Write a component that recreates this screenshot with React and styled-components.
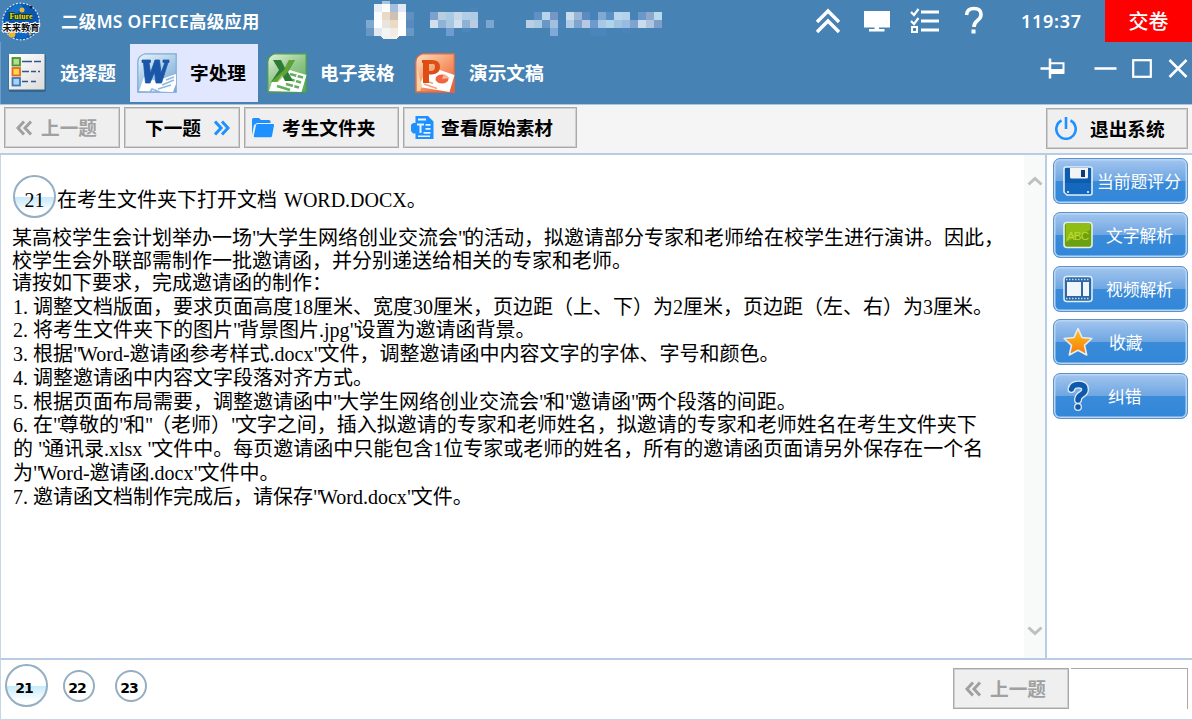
import React from 'react';
import styled, { createGlobalStyle } from 'styled-components';

const GlobalStyle = createGlobalStyle`
  * {
    box-sizing: border-box;
  }

  body {
    margin: 0;
    background: #fff;
    font-family: "Noto Sans", "Noto Sans CJK SC", sans-serif;
    text-spacing-trim: space-all;
  }
`;

const BLUE = "#1e90ff";

const avatarCells = [
    [382, 1, "#a8c5df", 3], [374, 4, "#e6eff6"], [382, 4, "#fbfcfc"], [390, 4, "#a5bedb"], [398, 4, "#e2e9f2"],
    [374, 12, "#fbfbfb"], [382, 12, "#e9dac5"], [390, 12, "#d0c0b4"], [398, 12, "#fafafa"], [406, 12, "#5e90c0"],
    [366, 20, "#7fa9cf"], [374, 20, "#ffffff"], [382, 20, "#e8e5df"], [390, 20, "#ecdac2"], [398, 20, "#ffffff"], [406, 20, "#588bbd"],
    [366, 28, "#6997c4"], [374, 28, "#e0e8f1"], [382, 28, "#f4f4f2"], [390, 28, "#f2ece4"], [398, 28, "#ffffff"], [406, 28, "#6a98c5"],
];

const nameCells = [
    [430, 12, "#7ba1cc"], [438, 12, "#b8cde0"], [446, 12, "#a8cbe4"], [454, 12, "#c8d8e8"], [462, 12, "#b0cfe6"], [470, 12, "#b0cbe5"], [470, 8, "#4b84b7", 4],
    [430, 20, "#d0dfeb"], [438, 20, "#90b2d6"], [446, 20, "#a8c6df"], [454, 20, "#d0e0f2"], [462, 20, "#90b2d2"], [470, 20, "#b8cce3"], [478, 20, "#4a82b6"], [486, 20, "#7ba6cf"],
    [446, 28, "#6f9ccc"], [462, 28, "#4c86ba", 4],
];

const idCells = [
    [534, 12, "#5e92c5"], [542, 12, "#b6d5ea"], [550, 12, "#7497c6"], [566, 12, "#c8dcee"], [574, 12, "#98b6d6"], [582, 12, "#5a8cc0"], [590, 12, "#4880b8"],
    [598, 12, "#7fa8d2"], [606, 12, "#5a90c3"], [614, 12, "#b8d7ee"], [622, 12, "#b4d2e9"], [638, 12, "#6a98ca"], [646, 12, "#8ea8cb"], [654, 12, "#b8daee"],
    [526, 20, "#b8cfe4"], [534, 20, "#a8cbe4"], [542, 20, "#6a98c6"], [550, 20, "#a0c0de"], [558, 20, "#4b84b9"], [566, 20, "#b0cce6"], [574, 20, "#7fa3ce"],
    [582, 20, "#b6c8e4"], [590, 20, "#6c9aca"], [598, 20, "#a8c8e5"], [606, 20, "#b0d4ec"], [614, 20, "#a0c4df"], [622, 20, "#98bcdf"], [630, 20, "#7fa3ce"],
    [638, 20, "#c8dcee"], [646, 20, "#b0c4de"], [654, 20, "#7b9ecb"],
    [550, 28, "#7faad7"], [590, 28, "#4c85bb"], [598, 28, "#4c85bb"], [622, 28, "#4a83b9", 6],
];

const introLines = [
    '某高校学生会计划举办一场"大学生网络创业交流会"的活动，拟邀请部分专家和老师给在校学生进行演讲。因此，',
    '校学生会外联部需制作一批邀请函，并分别递送给相关的专家和老师。',
    '请按如下要求，完成邀请函的制作：',
];

const stepLines = [
    '1. 调整文档版面，要求页面高度18厘米、宽度30厘米，页边距（上、下）为2厘米，页边距（左、右）为3厘米。',
    '2. 将考生文件夹下的图片"背景图片.jpg"设置为邀请函背景。',
    '3. 根据"Word-邀请函参考样式.docx"文件，调整邀请函中内容文字的字体、字号和颜色。',
    '4. 调整邀请函中内容文字段落对齐方式。',
    '5. 根据页面布局需要，调整邀请函中"大学生网络创业交流会"和"邀请函"两个段落的间距。',
    '6. 在"尊敬的"和"（老师）"文字之间，插入拟邀请的专家和老师姓名，拟邀请的专家和老师姓名在考生文件夹下',
    '的 "通讯录.xlsx "文件中。每页邀请函中只能包含1位专家或老师的姓名，所有的邀请函页面请另外保存在一个名',
    '为"Word-邀请函.docx"文件中。',
    '7. 邀请函文档制作完成后，请保存"Word.docx"文件。',
];

// straight quotes sit tighter than the rest of the line
function QuotedText({ text }) {
    return text.split('"').map((part, i) => (
        <React.Fragment key={i}>
            {i > 0 && <Quote>"</Quote>}
            {part}
        </React.Fragment>
    ));
}

function Mosaic() {
    return (
        <svg width="310" height="42" viewBox="360 0 310 42" shapeRendering="crispEdges">
            {[...avatarCells, ...nameCells, ...idCells].map(([x, y, fill, h = 8]) => (
                <rect key={`${x}-${y}`} x={x} y={y} width="8" height={h} fill={fill} />
            ))}
            <path d="M380 36h19l-3 3h-12z" fill="#f4f1ec" />
        </svg>
    );
}

function LogoIcon() {
    return (
        <svg width="42" height="42" viewBox="0 0 42 42">
            <circle cx="21" cy="21.500" r="18.300" fill="#0757b4" stroke="#d4e4f2" strokeWidth="1.200" strokeDasharray="2 1.500" />
            <path d="M8 12q5-8 13-8l2 4-9 7z" fill="#1673ca" />
            <circle cx="22" cy="10" r="2.500" fill="#e8b83c" />
            <circle cx="31" cy="7" r="1.500" fill="#222" />
            <circle cx="12" cy="34" r="3.500" fill="#f0b52a" />
            <circle cx="30" cy="34" r="1.500" fill="#e8a030" />
            <path d="M16 33l15-2-5 7-9 1z" fill="#0a68cc" />
            <text x="21" y="18.500" textAnchor="middle" fontFamily="Liberation Serif" fontWeight="700" fontSize="8" fill="#f5e21c" stroke="#17391f" strokeWidth="1.400" paintOrder="stroke" textLength="23">Future</text>
            <text x="21" y="30.500" textAnchor="middle" fontFamily="Noto Sans CJK SC" fontWeight="700" fontSize="9" fill="#111" stroke="#fff" strokeWidth="1.800" paintOrder="stroke" textLength="37" lengthAdjust="spacingAndGlyphs">未来教育</text>
        </svg>
    );
}

function ChoiceIcon() {
    return (
        <svg width="40" height="40" viewBox="0 0 40 40">
            <defs>
                <linearGradient id="sheet" x2="1" y2="1">
                    <stop offset="0" stopColor="#fff" />
                    <stop offset="1" stopColor="#dcdcdc" />
                </linearGradient>
            </defs>
            <rect x="0.500" y="1" width="37.500" height="38" rx="2" fill="#35597e" opacity="0.750" />
            <rect x="1" y="1" width="35.500" height="35.500" fill="url(#sheet)" />
            <rect x="4.500" y="5" width="7.500" height="7.500" fill="#b3dc8c" stroke="#479233" strokeWidth="1.800" />
            <rect x="4.500" y="15" width="7.500" height="7.500" fill="#ffd455" stroke="#e56a1a" strokeWidth="1.800" />
            <rect x="4.500" y="25" width="7.500" height="7.500" fill="#a9d3f4" stroke="#3f78b8" strokeWidth="1.800" />
            <path d="M14 8.500h10m2 0h7M14 18.500h7m2 0h5m2 0h2M14 28.500h6m3 0h5" stroke="#2f558c" strokeWidth="1.500" />
        </svg>
    );
}

function WordIcon() {
    return (
        <svg width="40" height="40" viewBox="0 0 40 40">
            <defs>
                <linearGradient id="word" x2="0.600" y2="1">
                    <stop offset="0" stopColor="#e9f5fc" />
                    <stop offset="0.600" stopColor="#a4c8e6" />
                    <stop offset="1" stopColor="#7fa8d6" />
                </linearGradient>
            </defs>
            <path d="M8 0.800h31.200v38.400H0.800V9q0-6 7.200-8.200z" fill="url(#word)" stroke="#7eaad2" strokeWidth="1.200" />
            <path d="M2 38l5-14 12 4 20-7v10l-3 8z" fill="#fff" />
            <path d="M13 39l2-3 8 3zM29 27l8-3m-12 8l12-5m-16 9l13-4" fill="none" stroke="#8fb8e0" strokeWidth="1.600" />
            <path d="M5 7h8.500v2.500H12L13.500 20 18 7h4.500L24 20l4-10.500h-2V7h6v2.500h-1L24.500 30H19l-1.500-11L13 30H8.500L6.500 9.500H5z" fill="#1b57a8" stroke="#1b57a8" strokeWidth="0.800" />
        </svg>
    );
}

function ExcelIcon() {
    return (
        <svg width="40" height="40" viewBox="0 0 40 40">
            <defs>
                <linearGradient id="excel" x2="0.700" y2="1">
                    <stop offset="0" stopColor="#e4f3df" />
                    <stop offset="0.550" stopColor="#91c788" />
                    <stop offset="1" stopColor="#5fac58" />
                </linearGradient>
            </defs>
            <path d="M8 0.800h31.200v38.400H0.800V9q0-6 7.200-8.200z" fill="url(#excel)" stroke="#4a9c49" strokeWidth="1.200" />
            <path d="M2 38l3-9 14-13 20.500 6-5 17z" fill="#fff" />
            <path d="M23 21l13 3.500M22 26l12 3.500M19 31l13 3.500M10 33l13 4" stroke="#64ae5d" strokeWidth="2.400" fill="none" />
            <path d="M31 20l-6 18" stroke="#fff" strokeWidth="1.500" />
            <path d="M6 7h8l4 8 4-8h6l-7 12 5 9h-8l-3-6-5 7H4l8-12z" fill="#2c7c35" />
            <path d="M17 17l5-10h6l-8 13-9 9H4z" fill="#7dba38" opacity="0.650" />
        </svg>
    );
}

function PowerPointIcon() {
    return (
        <svg width="40" height="40" viewBox="0 0 40 40">
            <defs>
                <linearGradient id="ppt" x2="0.800" y2="1">
                    <stop offset="0" stopColor="#fbe3c4" />
                    <stop offset="0.550" stopColor="#f69a6c" />
                    <stop offset="1" stopColor="#ed6138" />
                </linearGradient>
            </defs>
            <path d="M8 0.800h31.200v38.400H0.800V9q0-6 7.200-8.200z" fill="url(#ppt)" stroke="#e4683f" strokeWidth="1.200" />
            <path d="M4 34l4-10 14-8 17.500 6-5 17z" fill="#fff" />
            <path d="M2 38V14l3 12 2 7-2 5z" fill="#f8d1a4" />
            <path d="M9 31l13 4.500m-12-8l8 3" stroke="#f3a37f" strokeWidth="1.800" />
            <ellipse cx="27" cy="26" rx="6.500" ry="4.500" fill="#ef6540" />
            <path d="M27 26l2-5 6 4z" fill="#f9b498" />
            <path d="M7 7h10q8 0 8 7t-8 7.500h-3V30H8V10H7zm7 4v7h2q4 0 4-4t-3-3z" fill="#de4d14" fillRule="evenodd" />
        </svg>
    );
}

function Chevrons({ flip, color }) {
    return (
        <svg width="17" height="16" viewBox="0 0 17 16" style={{ transform: flip ? "scaleX(-1)" : "none" }}>
            <path d="M8 1.500L2 8l6 6.500M15 1.500L9 8l6 6.500" fill="none" stroke={color} strokeWidth="3" />
        </svg>
    );
}

function FolderIcon() {
    return (
        <svg width="22" height="20" viewBox="0 0 22 20">
            <path d="M0 17V1.500Q0 0 1.500 0H7l2 2h8q1.500 0 1.500 1.500V5H5L2 7z" fill={BLUE} />
            <path d="M5.500 6H21q1.200 0 1 1.200L20 18q-.3 1.200-1.500 1.200H3q-1.400 0-1.200-1.400L4 7.200Q4.300 6 5.500 6z" fill={BLUE} />
        </svg>
    );
}

function SourceIcon() {
    return (
        <svg width="23" height="23" viewBox="0 0 23 23">
            <path d="M4.500 0H17l5.500 5.500V23h-18v-5.500H2L0 15V9l2-2h2.500z" fill={BLUE} />
            <path d="M7 2.500h8v2H7zM6 7.500h7v2h-2.500V17h-2V9.500H6zM14.500 8h5v1.800h-5zM14.500 12h5v1.800h-5zM12.500 16h7v1.800h-7zM7 19.500h12v1.500H7z" fill="#eaf4ff" />
        </svg>
    );
}

function PowerIcon() {
    return (
        <svg width="22" height="23" viewBox="0 0 22 23">
            <path d="M6.500 3.500a9.700 9.700 0 1 0 9 0M11 0v12" fill="none" stroke={BLUE} strokeWidth="2.600" />
        </svg>
    );
}

function TopIcons() {
    return (
        <svg width="170" height="42" viewBox="815 0 170 42">
            <g fill="none" stroke="#fff">
                <path d="M817 22l11-11 11 11M817 32l11-11 11 11" strokeWidth="3.400" />
                <path d="M921 12h18M921 21h18M921 30h18" strokeWidth="3" />
                <path d="M911 12l3 3 4.500-6M911 21l3 3 4.500-6" strokeWidth="2.200" />
                <rect x="912" y="27" width="5" height="5" strokeWidth="2" />
                <path d="M966.500 15q.5-6.500 7.500-6.500t7 6q0 3.500-3.500 6-3.500 2.500-3.500 6.500" strokeWidth="3.600" />
            </g>
            <path d="M864 11h26v16.500h-11V29h5.500v2.500h-15.500V29h5.500v-1.500H864zM971.500 29.500h4v4h-4z" fill="#fff" />
        </svg>
    );
}

function WindowIcons() {
    return (
        <svg width="152" height="24" viewBox="1040 56 152 24">
            <g fill="none" stroke="#fff" strokeWidth="2.500">
                <path d="M1040.500 68.500h10M1050 58.500v20" />
                <path d="M1051 63.200h12.500v9.500H1051" strokeWidth="2" />
                <path d="M1094.500 68.500h22" />
                <rect x="1133.200" y="60.200" width="17.600" height="16.600" strokeWidth="2.200" />
                <path d="M1169.500 60l17 17M1186.500 60l-17 17" />
            </g>
            <path d="M1051 69h13v5h-13z" fill="#fff" />
        </svg>
    );
}

function SaveIcon() {
    return (
        <svg width="30" height="30" viewBox="0 0 30 30">
            <path d="M3 1h24q2 0 2 2v24q0 2-2 2H4l-3-3V3q0-2 2-2z" fill="#0e5cae" stroke="#e4eff9" strokeWidth="1.600" />
            <path d="M7 2h18v9q0 1.500-1.500 1.500h-15Q7 12.500 7 11z" fill="#f4f4f4" />
            <path d="M18 4h4v7h-4z" fill="#0c3c7c" />
            <path d="M2 17h26v10l-1 1H4l-2-2z" fill="#1468bd" />
            <path d="M4 26h2M24 26h2" stroke="#fff" strokeWidth="1.500" />
        </svg>
    );
}

function AbcIcon() {
    return (
        <svg width="30" height="28" viewBox="0 0 30 28">
            <rect x="1" y="1.500" width="28" height="25" rx="3" fill="#6ba012" stroke="#e6f0e2" strokeWidth="1.600" />
            <path d="M3 3h24v6L3 21z" fill="#8fbd14" />
            <text x="15" y="18.500" textAnchor="middle" fontFamily="Liberation Sans" fontSize="11.500" fill="#c0d830" textLength="22">ABC</text>
        </svg>
    );
}

function FilmIcon() {
    return (
        <svg width="30" height="28" viewBox="0 0 30 28">
            <rect x="1" y="1.500" width="28" height="25" rx="3" fill="#2a68a8" stroke="#e1edf7" strokeWidth="1.600" />
            <path d="M3 4.500h24M3 23.500h24" stroke="#c4dbf0" strokeWidth="1.400" strokeDasharray="1.500 1.500" />
            <path d="M4 7h14v14H4zM20 7h6v14h-6z" fill="#f1f6fa" />
        </svg>
    );
}

function StarIcon() {
    return (
        <svg width="30" height="30" viewBox="0 0 30 30">
            <defs>
                <linearGradient id="star" x2="0" y2="1">
                    <stop offset="0" stopColor="#ffc21c" />
                    <stop offset="1" stopColor="#f27a0c" />
                </linearGradient>
            </defs>
            <path d="M15 1.500l4 9 9.800 1-7.300 6.800 2.200 9.700L15 23.200 6.300 28l2.200-9.700-7.300-6.800 9.800-1z" fill="url(#star)" stroke="#e5edf3" strokeWidth="1.600" strokeLinejoin="round" />
        </svg>
    );
}

function HelpIcon() {
    return (
        <svg width="30" height="32" viewBox="0 0 30 32">
            <g fill="none" stroke="#e0ebf5" strokeWidth="8" strokeLinecap="round">
                <path d="M8.500 9q1-4.500 7-4.500 6.500 0 6.500 5 0 3-3.500 5t-3.500 5.500M15 27v.1" />
                <path d="M8.500 9q1-4.500 7-4.500 6.500 0 6.500 5 0 3-3.500 5t-3.500 5.500M15 27v.1" stroke="#0d59ad" strokeWidth="5.400" />
            </g>
        </svg>
    );
}

function PrevButton() {
    return (
        <ToolButton $width={116} $pad={11} $gap={8} disabled>
            <Chevrons color="#a0a0a0" /><Label>上一题</Label>
        </ToolButton>
    );
}

export default function App() {
    return (
        <Window>
            <GlobalStyle />
            <TitleBar>
                <LogoIcon />
                <Title>二级MS OFFICE高级应用</Title>
                <Mosaic />
                <TopTools>
                    <TopIcons />
                    <Timer>119:37</Timer>
                    <SubmitButton>交卷</SubmitButton>
                </TopTools>
            </TitleBar>
            <TabBar>
                <Tab $width={130} $pad={8} $gap={12}><ChoiceIcon /><Label>选择题</Label></Tab>
                <Tab $width={128} $pad={7} $gap={13} $active><WordIcon /><Label>字处理</Label></Tab>
                <Tab $width={148} $pad={9} $gap={13}><ExcelIcon /><Label>电子表格</Label></Tab>
                <Tab $width={148} $pad={9} $gap={14}><PowerPointIcon /><Label>演示文稿</Label></Tab>
                <WindowControls><WindowIcons /></WindowControls>
            </TabBar>
            <ToolBar>
                <PrevButton />
                <ToolButton $width={116} $pad={20} $gap={12}><Label>下一题</Label><Chevrons color={BLUE} flip /></ToolButton>
                <ToolButton $width={155} $pad={7} $gap={8}><FolderIcon /><Label>考生文件夹</Label></ToolButton>
                <ToolButton $width={174} $pad={7} $gap={7}><SourceIcon /><Label>查看原始素材</Label></ToolButton>
                <ExitButton $width={142} $pad={8} $gap={13}><PowerIcon /><Label>退出系统</Label></ExitButton>
            </ToolBar>
            <Main>
                <Article>
                    <Heading>
                        <QuestionMark>21</QuestionMark>
                        在考生文件夹下打开文档 <FileName>WORD.DOCX。</FileName>
                    </Heading>
                    {introLines.map((line) => <Line key={line} $height={22.5}><QuotedText text={line} /></Line>)}
                    <Steps>
                        {stepLines.map((line) => <Line key={line} $height={23.8}><QuotedText text={line} /></Line>)}
                    </Steps>
                </Article>
                <ScrollBar>
                    <svg width="16" height="10" viewBox="0 0 16 10"><path d="M1.500 8.500L8 2.500l6.500 6" fill="none" stroke="#bfbfbf" strokeWidth="3" /></svg>
                    <svg width="16" height="10" viewBox="0 0 16 10"><path d="M1.500 1.500L8 7.500l6.500-6" fill="none" stroke="#bfbfbf" strokeWidth="3" /></svg>
                </ScrollBar>
                <SideBar>
                    <SideButton $gap={4}><SaveIcon />当前题评分</SideButton>
                    <SideButton $gap={13}><AbcIcon />文字解析</SideButton>
                    <SideButton $gap={13}><FilmIcon />视频解析</SideButton>
                    <SideButton $gap={16}><StarIcon />收藏</SideButton>
                    <SideButton $gap={15}><HelpIcon />纠错</SideButton>
                </SideBar>
            </Main>
            <Footer>
                <Pager>
                    <PageNumber $active>21</PageNumber>
                    <PageNumber>22</PageNumber>
                    <PageNumber>23</PageNumber>
                </Pager>
                <PrevButton />
                <EmptySlot />
            </Footer>
        </Window>
    );
}

const Window = styled.div`
  width: 1192px;
  height: 720px;
  display: flex;
  flex-direction: column;
  overflow: hidden;
  background: #fff;
`;

const TitleBar = styled.header`
  flex: 0 0 42px;
  display: flex;
  align-items: center;
  background: #4682b4;
  color: #fff;
`;

const Title = styled.h1`
  margin: 0;
  padding-left: 19px;
  width: 318px;
  font-size: 17.4px;
  line-height: 24px;
  font-weight: 600;
  letter-spacing: 0.3px;
  white-space: nowrap;
`;

const TopTools = styled.div`
  margin-left: auto;
  display: flex;
  align-items: center;
`;

const Timer = styled.span`
  width: 120px;
  padding-left: 36px;
  font-size: 18px;
  font-weight: 600;
  letter-spacing: 0.7px;
`;

const SubmitButton = styled.button`
  width: 87px;
  height: 42px;
  padding: 0 0 2px;
  border: 0;
  background: #f00;
  color: #fff;
  font: 500 20px "Noto Sans CJK SC", sans-serif;
`;

const TabBar = styled.nav`
  flex: 0 0 62px;
  display: flex;
  align-items: flex-start;
  background: #4682b4;
  border-left: 1px solid #6f9cc6;
`;

const Tab = styled.div`
  width: ${({ $width }) => $width}px;
  height: 58px;
  margin: 2px 0 0;
  padding-left: ${({ $pad }) => $pad}px;
  display: flex;
  align-items: center;
  gap: ${({ $gap }) => $gap}px;
  background: ${({ $active }) => ($active ? "#e0e7ff" : "transparent")};
  color: ${({ $active }) => ($active ? "#000" : "#fff")};
  font: 700 18.67px "Noto Sans CJK SC", sans-serif;
  white-space: nowrap;

  &:first-child {
    margin-left: -1px;
  }
`;

const Label = styled.span`
  padding-bottom: 3px;
`;

const WindowControls = styled.div`
  margin: 14px 0 0 auto;
  display: flex;
`;

const ToolBar = styled.div`
  flex: 0 0 51px;
  display: flex;
  gap: 4px;
  padding: 2px 4px 0;
  border-top: 1px solid #b0c4de;
  border-bottom: 2px solid #b8cce4;
  background: #f5f5f5;
`;

const ToolButton = styled.button`
  width: ${({ $width }) => $width}px;
  height: 41px;
  padding: 0 0 0 ${({ $pad }) => $pad}px;
  display: flex;
  align-items: center;
  gap: ${({ $gap }) => $gap}px;
  border: 1px solid #a9a9a9;
  outline: 1px solid #d0d0d0;
  outline-offset: -2px;
  background: #efefef;
  color: ${({ disabled }) => (disabled ? "#a0a0a0" : "#000")};
  font: 700 18.67px "Noto Sans CJK SC", sans-serif;
  white-space: nowrap;
`;

const ExitButton = styled(ToolButton)`
  margin: 1px 0 0 auto;
`;

const Main = styled.main`
  flex: 1;
  min-height: 0;
  display: flex;
  border-left: 1px solid #c5d5ea;
`;

const Article = styled.article`
  flex: 1;
  min-width: 0;
  padding: 20px 0 0 11px;
  font-family: "Liberation Serif", "Noto Sans CJK SC", serif;
  font-size: 20px;
  color: #000;
  white-space: nowrap;
`;

const Heading = styled.div`
  height: 52px;
  display: flex;
  padding-left: 1px;
  line-height: 50px;
`;

const QuestionMark = styled.span`
  width: 43px;
  height: 43px;
  margin-right: 1px;
  border: 2px solid #94aec2;
  border-radius: 50%;
  background: linear-gradient(#fff 50%, #c4e8fb 51%, #fff 88%);
  line-height: 47px;
  text-align: center;
`;

const FileName = styled.span`
  margin-left: 7px;
`;

const Line = styled.div`
  height: ${({ $height }) => $height}px;
  line-height: ${({ $height }) => $height}px;
`;

const Steps = styled.div`
  padding: 1px 0 0 1px;
`;

const Quote = styled.span`
  letter-spacing: -2.2px;
`;

const ScrollBar = styled.div`
  width: 21px;
  padding: 21px 0 22px 3px;
  display: flex;
  flex-direction: column;
  justify-content: space-between;
  background: #f8faf9;
`;

const SideBar = styled.aside`
  width: 147px;
  padding: 3px 4px 0 6px;
  display: flex;
  flex-direction: column;
  gap: 7.8px;
  border-left: 2px solid #b8cce4;
`;

const SideButton = styled.button`
  width: 135px;
  height: 46px;
  flex: none;
  padding: 0 0 0 9px;
  display: flex;
  align-items: center;
  gap: ${({ $gap }) => $gap}px;
  border: 1.5px solid #5b93cb;
  border-radius: 7px;
  box-shadow: inset 0 0 0 1.5px #b9d5f2;
  background: linear-gradient(#a3c6ef, #6fa6e2 49%, #3a8bd9 51%, #3287d9);
  color: #fff;
  font: 400 16.8px "Noto Sans CJK SC", sans-serif;
  white-space: nowrap;
`;

const Footer = styled.footer`
  flex: 0 0 62px;
  display: flex;
  padding: 8px 4px 0 0;
  border: 1px solid #c5d5ea;
  border-top: 2px solid #b8cce4;
  border-right: 0;
`;

const Pager = styled.div`
  height: 43px;
  margin: -4px auto 0 4px;
  display: flex;
  align-items: center;
  gap: 20px;
`;

const PageNumber = styled.span`
  width: ${({ $active }) => ($active ? 43 : 32)}px;
  height: ${({ $active }) => ($active ? 43 : 32)}px;
  margin-right: ${({ $active }) => ($active ? -5 : 0)}px;
  padding: ${({ $active }) => ($active ? "5px 5px 0 0" : "4px 4px 0 0")};
  display: flex;
  align-items: center;
  justify-content: center;
  border: 2px solid #94aec2;
  border-radius: 50%;
  background: ${({ $active }) => ($active ? "linear-gradient(#fff 50%, #c4ebfb 51%, #fff 90%)" : "#fff")};
  font: 700 14px "DejaVu Sans", sans-serif;
  letter-spacing: -1px;
`;

const EmptySlot = styled.div`
  width: 117px;
  height: 41px;
  margin-left: 2px;
  border-top: 1px solid #a9a9a9;
  border-right: 1px solid #a9a9a9;
`;
